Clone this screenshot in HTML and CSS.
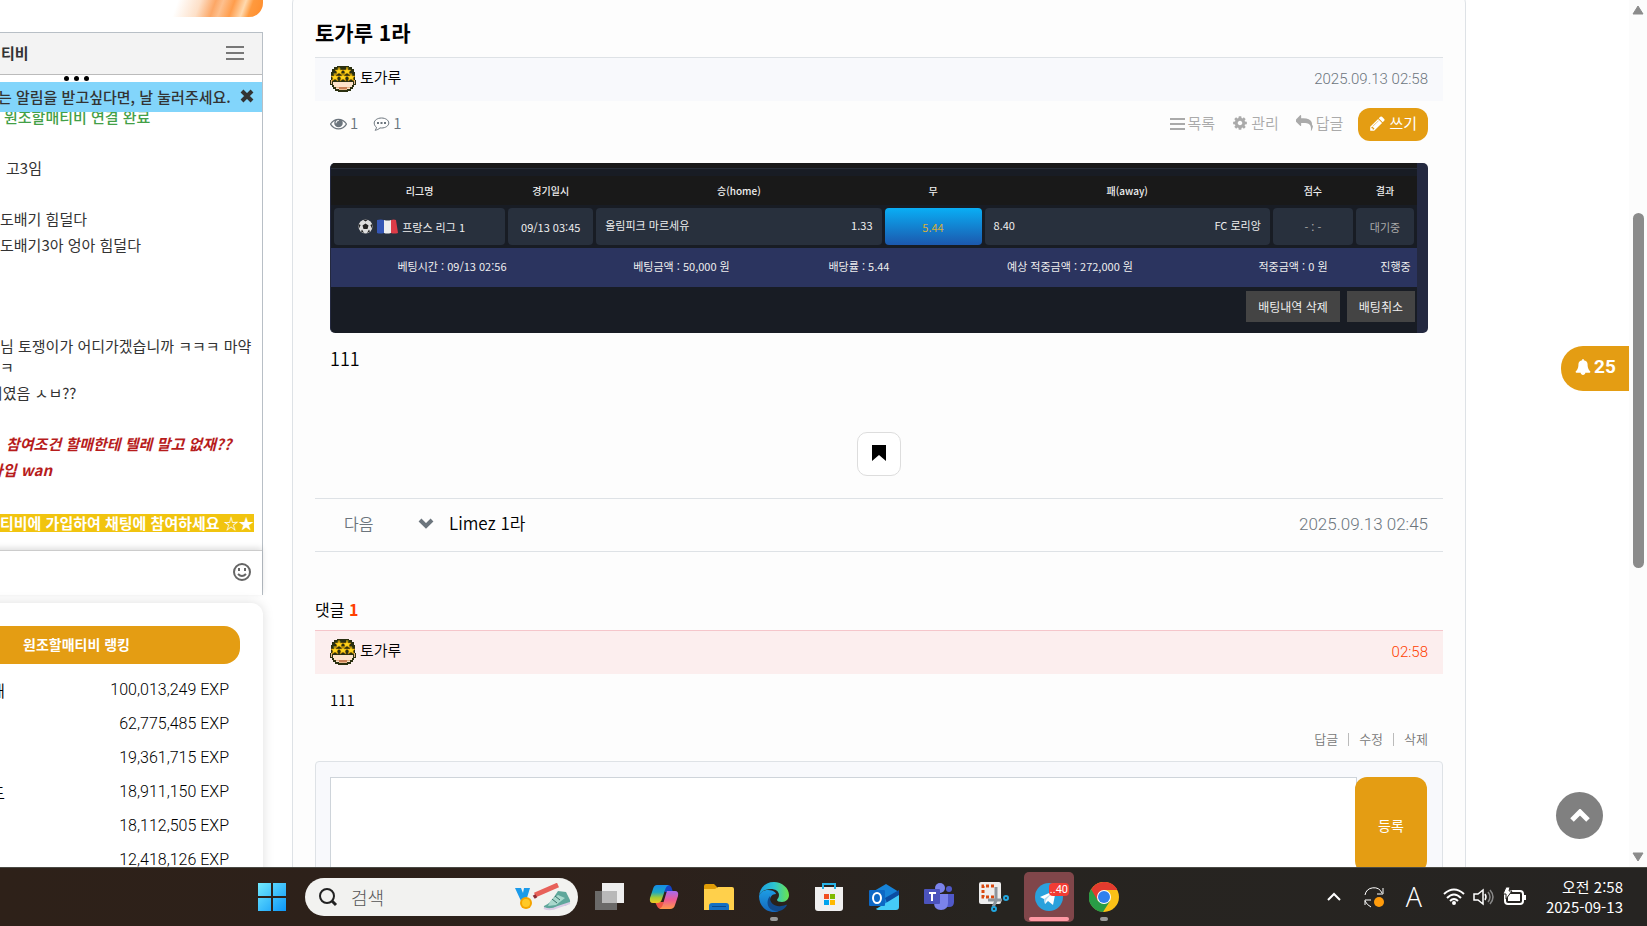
FILE: index.html
```html
<!doctype html>
<html lang="ko">
<head>
    <meta charset="UTF-8">
    <meta content="width=device-width, initial-scale=1" name="viewport">
    <title>토가루 1라</title>
    <link rel="stylesheet" href="styles.css">
</head>
<body>
<!-- shared symbols -->
<svg class="symbols" aria-hidden="true">
    <symbol id="soldier" viewBox="0 0 26 26">
        <path fill="#2b3010" d="M7 0h12v1h3v2h2v3h1v8h1v5h-2v2h-1v2h-2v2h-3v1H8v-1H5v-2H3v-2H2v-2H0v-5h1V6h1V3h2V1h3z"/>
        <path fill="#4b5a15" d="M7 2h4v2H7zM16 1h3v2h-3zM3 7h3v2H3zM20 8h3v2h-3zM11 7h4v3h-4z"/>
        <path fill="#fde3cb" d="M3 16h20v3h-1v2h-2v2h-3v1H9v-1H6v-2H4v-2H3z"/>
        <path fill="#e9b98c" d="M1 14h1v4H1zM24 14h1v4h-1zM6 21h14v1h-3v2H9v-2H6z"/>
        <path fill="#c98057" d="M9 21h8v2H9z"/>
        <g fill="#ffd51c" stroke="#c98900" stroke-width=".5">
            <path id="star" d="M9 1l1 3h3l-2 2 1 3-3-2-3 2 1-3-2-2h3z"/>
            <use href="#star" x="8"/>
            <use href="#star" x="-4" y="6"/>
            <use href="#star" x="4" y="6"/>
            <use href="#star" x="12" y="6"/>
        </g>
    </symbol>
</svg>

<div class="window">
    <aside class="sidebar">
        <div class="banner"></div>
        <section class="chat">
            <header class="chat-header">
                <b>티비</b>
                <button class="chat-menu" aria-label="메뉴"><span></span><span></span><span></span></button>
            </header>
            <div class="chat-dots"><i></i><i></i><i></i></div>
            <div class="chat-notice">
                <span>는 알림을 받고싶다면, 날 눌러주세요.</span>
                <button aria-label="닫기">
                    <svg width="14" height="14" viewBox="0 0 14 14"><path d="M2 2l10 10M12 2L2 12" stroke="#333" stroke-width="4"/></svg>
                </button>
            </div>
            <ul class="chat-list">
                <li class="connected">원조할매티비 연결 완료</li>
                <li class="blank"></li>
                <li class="inset">고3임</li>
                <li class="blank"></li>
                <li>도배기 힘덜다</li>
                <li>도배기3아 엉아 힘덜다</li>
                <li class="blank"></li>
                <li class="blank"></li>
                <li class="blank"></li>
                <li>님 토쟁이가 어디가겠습니까 ㅋㅋㅋ 마약<br>ㅋ</li>
                <li class="cut">이였음 ㅅㅂ??</li>
                <li class="blank"></li>
                <li class="hot inset">참여조건 할매한테 텔레 말고 없재??</li>
                <li class="hot cut">가입 wan</li>
                <li class="blank"></li>
                <li class="join"><mark>티비에 가입하여 채팅에 참여하세요 ☆★</mark></li>
            </ul>
            <div class="chat-input">
                <button aria-label="이모티콘">
                    <svg width="20" height="20" viewBox="0 0 20 20" fill="none" stroke="#666" stroke-width="2">
                        <circle cx="10" cy="10" r="8"/>
                        <path d="M6 12q4 4 8 0"/>
                        <path d="M7 6v3M13 6v3"/>
                    </svg>
                </button>
            </div>
        </section>
        <section class="ranking">
            <h2>원조할매티비 랭킹</h2>
            <ol>
                <li><span>매</span><span>100,013,249 EXP</span></li>
                <li><span></span><span>62,775,485 EXP</span></li>
                <li><span></span><span>19,361,715 EXP</span></li>
                <li><span>드</span><span>18,911,150 EXP</span></li>
                <li><span></span><span>18,112,505 EXP</span></li>
                <li><span></span><span>12,418,126 EXP</span></li>
            </ol>
        </section>
    </aside>

    <main class="board">
        <h1>토가루 1라</h1>
        <div class="author-bar">
            <svg class="avatar" width="26" height="26"><use href="#soldier"/></svg>
            <a href="#">토가루</a>
            <time>2025.09.13 02:58</time>
        </div>
        <div class="tools">
            <span class="count">
                <svg width="17" height="17" viewBox="0 0 1792 1792"><path d="M1664 960q-152-236-381-353 61 104 61 225 0 185-131.500 316.500t-316.500 131.500-316.500-131.500-131.500-316.500q0-121 61-225-229 117-381 353 133 205 333.500 326.500t434.500 121.500 434.500-121.500 333.500-326.500zm-720-384q0-20-14-34t-34-14q-125 0-214.500 89.500t-89.500 214.500q0 20 14 34t34 14 34-14 14-34q0-86 61-147t147-61q20 0 34-14t14-34zm848 384q0 34-20 69-140 230-376.500 368.500t-499.500 138.500-499.500-139-376.500-368q-20-35-20-69t20-69q140-229 376.500-368t499.500-139 499.500 139 376.500 368q20 35 20 69z"/></svg>
                1
            </span>
            <span class="count">
                <svg width="17" height="17" viewBox="0 0 17 17">
                    <path d="M8.500 3C12.600 3 15.800 5.300 15.800 8s-3.200 5-7.300 5l-1.500-.1C5.500 14.300 4 15 2 15.200c1-1 1.400-1.800 1.400-3C2 11.200 1.200 9.700 1.200 8c0-2.700 3.200-5 7.300-5z" fill="none" stroke="#6c757d"/>
                    <path d="M4 7h2v2H4zM7.500 7h2v2h-2zM11 7h2v2h-2z"/>
                </svg>
                1
            </span>
            <nav>
                <a href="#"><svg width="15" height="15" viewBox="0 0 15 15"><path d="M0 2h15v2H0zM0 7h15v2H0zM0 12h15v2H0z"/></svg>목록</a>
                <a href="#"><svg width="16" height="16" viewBox="0 0 1792 1792"><path d="M1152 896q0-106-75-181t-181-75-181 75-75 181 75 181 181 75 181-75 75-181zm512-109v222q0 12-8 23t-20 13l-185 28q-19 54-39 91 35 50 107 138 10 12 10 25t-9 23q-27 37-99 108t-94 71q-12 0-26-9l-138-108q-44 23-91 38-16 136-29 186-7 28-36 28h-222q-14 0-24.500-8.500t-11.500-21.500l-28-184q-49-16-90-37l-141 107q-10 9-25 9-14 0-25-11-126-114-165-168-7-10-7-23 0-12 8-23 15-21 51-66.500t54-70.500q-27-50-41-99l-183-27q-13-2-21-12.500t-8-23.500v-222q0-12 8-23t19-13l186-28q14-46 39-92-40-57-107-138-10-12-10-24 0-10 9-23 26-36 98.500-107.500t94.500-71.500q13 0 26 10l138 107q44-23 91-38 16-136 29-186 7-28 36-28h222q14 0 24.500 8.500t11.500 21.500l28 184q49 16 90 37l142-107q9-9 24-9 13 0 25 10 129 119 165 170 7 8 7 22 0 12-8 23-15 21-51 66.500t-54 70.500q26 50 41 98l183 28q13 2 21 12.500t8 23.500z"/></svg>관리</a>
                <a href="#"><svg width="17" height="17" viewBox="0 0 1792 1792"><path d="M1792 1120q0 166-127 451-3 7-10.500 24t-13.500 30-13 22q-12 17-28 17-15 0-23.500-10t-8.500-25q0-9 2.500-26.500t2.500-23.500q5-68 5-123 0-112-19.500-200.500t-54-153.500-89-112-118-77.500-149-42.500-174.500-19.500-207-5.500h-224v256q0 26-19 45t-45 19-45-19l-512-512q-19-19-19-45t19-45l512-512q19-19 45-19t45 19 19 45v256h224q713 0 875 403 53 134 53 333z"/></svg>답글</a>
                <a class="write" href="#"><svg width="17" height="17" viewBox="0 0 1792 1792"><path d="M491 1536l91-91-235-235-91 91v107h128v128h107zm523-928q0-22-22-22-10 0-17 7l-542 542q-7 7-7 17 0 22 22 22 10 0 17-7l542-542q7-7 7-17zm-54-192l416 416-832 832h-416v-416zm683 96q0 53-37 90l-166 166-416-416 166-165q36-38 90-38 53 0 91 38l235 234q37 39 37 91z"/></svg>쓰기</a>
            </nav>
        </div>

        <div class="slip">
            <div class="slip-top"></div>
            <table>
                <colgroup>
                    <col class="w-league"><col class="w-date"><col class="w-team"><col class="w-draw"><col class="w-team"><col class="w-score"><col class="w-result">
                </colgroup>
                <thead>
                <tr>
                    <th>리그명</th>
                    <th>경기일시</th>
                    <th>승(home)</th>
                    <th>무</th>
                    <th>패(away)</th>
                    <th>점수</th>
                    <th>결과</th>
                </tr>
                </thead>
                <tbody>
                <tr>
                    <td>
                        <div class="league">
                            <svg width="15" height="15" viewBox="0 0 15 15">
                                <circle cx="7.500" cy="7.500" r="7" fill="#ddd"/>
                                <path fill="#222" d="M7.500 4.500l3 2-1 3.500h-4l-1-3.500zM5 .8h5L7.500 2.500zM.6 5l2 1L1 9.500zM14.400 5l-2 1L14 9.500zM3 12.500l1-2 2 3.500zM12 12.500l-1-2-2 3.500z"/>
                            </svg>
                            <svg width="21" height="15" viewBox="0 0 21 15">
                                <path fill="#3556b5" d="M0 1q4-1 7 0v13q-4 1-7 0z"/>
                                <path fill="#eee" d="M7 1q4 1 7 0v13q-4 1-7 0z"/>
                                <path fill="#dc3c48" d="M14 1q3-1 5 0l2 13q-4 1-7 0z"/>
                            </svg>
                            <span>프랑스 리그 1</span>
                        </div>
                    </td>
                    <td>09/13 03:45</td>
                    <td><div class="team"><span>올림피크 마르세유</span><span>1.33</span></div></td>
                    <td class="picked">5.44</td>
                    <td><div class="team"><span>8.40</span><span>FC 로리앙</span></div></td>
                    <td class="dim">- : -</td>
                    <td class="dim">대기중</td>
                </tr>
                </tbody>
            </table>
            <div class="slip-sum">
                <span>베팅시간 : 09/13 02:56</span>
                <span>베팅금액 : 50,000 원</span>
                <span>배당률 : 5.44</span>
                <span>예상 적중금액 : 272,000 원</span>
                <span>적중금액 : 0 원</span>
                <span>진행중</span>
            </div>
            <div class="slip-actions">
                <button>배팅내역 삭제</button>
                <button>배팅취소</button>
            </div>
        </div>

        <p class="content">111</p>
        <button class="bookmark" aria-label="스크랩">
            <svg width="14" height="16" viewBox="0 0 14 16"><path d="M0 0h14v16l-7-6-7 6z"/></svg>
        </button>

        <div class="next-post">
            <span class="label">다음</span>
            <svg width="16" height="12" viewBox="0 0 16 12"><path d="M2 2l6 6 6-6" fill="none" stroke="#6c757d" stroke-width="4"/></svg>
            <a href="#">Limez 1라</a>
            <time>2025.09.13 02:45</time>
        </div>

        <h2 class="comment-title">댓글 <b>1</b></h2>
        <div class="author-bar mine">
            <svg class="avatar" width="26" height="26"><use href="#soldier"/></svg>
            <a href="#">토가루</a>
            <time>02:58</time>
        </div>
        <p class="comment">111</p>
        <div class="comment-actions">
            <a href="#">답글</a><i></i><a href="#">수정</a><i></i><a href="#">삭제</a>
        </div>
        <form class="comment-form">
            <textarea aria-label="댓글 내용"></textarea>
            <button type="button">등록</button>
        </form>
    </main>

    <div class="scrollbar">
        <svg width="12" height="10" viewBox="0 0 12 10"><path d="M6 1l5 8H1z" fill="#8b8b8b" stroke="#8b8b8b" stroke-linejoin="round"/></svg>
        <div class="track"><div class="thumb"></div></div>
        <svg width="12" height="10" viewBox="0 0 12 10"><path d="M6 9L1 1h10z" fill="#8b8b8b" stroke="#8b8b8b" stroke-linejoin="round"/></svg>
    </div>

    <button class="alarm">
        <svg width="16" height="16" viewBox="0 0 1792 1792"><path d="M1728 1408q0 52-38 90t-90 38h-448q0 106-75 181t-181 75-181-75-75-181h-448q-52 0-90-38t-38-90q50-42 91-88t85-119.500 74.500-158.500 50-206 19.500-260q0-152 117-282.500t307-158.500q-8-19-8-39 0-40 28-68t68-28 68 28 28 68q0 20-8 39 190 28 307 158.500t117 282.500q0 139 19.500 260t50 206 74.500 158.500 85 119.500 91 88z"/></svg>
        25
    </button>
    <button class="go-top" aria-label="맨 위로">
        <svg width="20" height="14" viewBox="0 0 20 14"><path d="M2 11l8-8 8 8" fill="none" stroke="#fff" stroke-width="5"/></svg>
    </button>
</div>

<footer class="taskbar">
    <button class="app" aria-label="시작">
        <svg width="30" height="30" viewBox="0 0 30 30">
            <defs><linearGradient id="win" x1="0" y1="0" x2="1" y2="1" gradientUnits="objectBoundingBox"><stop stop-color="#72eafe"/><stop offset="1" stop-color="#0c96f8"/></linearGradient></defs>
            <path fill="url(#win)" d="M1 1h13v13H1zM16 1h13v13H16zM1 16h13v13H1zM16 16h13v13H16z"/>
        </svg>
    </button>
    <label class="search">
        <svg width="20" height="20" viewBox="0 0 20 20" fill="none" stroke="#222"><circle cx="9" cy="9" r="7" stroke-width="2"/><path d="M14 14l4 4" stroke-width="3"/></svg>
        <input type="text" placeholder="검색" aria-label="검색">
        <svg width="56" height="28" viewBox="0 0 56 28">
            <path fill="#1c9bea" d="M0 5h6l4 10-4 3zM9 5h6l-4 13-4-3z"/>
            <circle cx="11" cy="20" r="6" fill="#f5a400"/><circle cx="11" cy="20" r="4" fill="#ffc928"/>
            <path d="M20 12L43 2" stroke="#e8615a" stroke-width="5"/><path d="M19 12l2 3" stroke="#8d2b33" stroke-width="3"/>
            <path fill="#5fa79b" d="M29 23q7-3 10-9l4-6 8 1 3 6q3 5-2 7l-18 4q-6 0-5-3z"/>
            <path fill="#a8d8cc" d="M36 17l7-5 7 3-9 7-8 1z"/>
            <path fill="none" stroke="#d9cbe4" stroke-width="2" d="M29 25q6 3 14-1l12-4"/>
            <path stroke="#386f68" d="M40 13l5 4M37 16l5 4"/>
        </svg>
    </label>
    <div class="apps">
        <button class="app" aria-label="작업 보기">
            <svg width="30" height="28" viewBox="0 0 30 28"><path fill="#eee" d="M8 0h22v20H8z"/><path fill="#777" fill-opacity=".85" d="M1 8h22v19H1z"/><path fill="#b9b9b9" d="M8 8h15v12H8z"/></svg>
        </button>
        <button class="app" aria-label="Copilot">
            <svg width="30" height="28" viewBox="0 0 30 28">
                <defs>
                    <linearGradient id="coA" x2="0" y2="1"><stop stop-color="#168be8"/><stop offset=".4" stop-color="#1aa8c4"/><stop offset=".7" stop-color="#a1cc35"/><stop offset="1" stop-color="#f4ca22"/></linearGradient>
                    <linearGradient id="coB" x2="0" y2="1"><stop stop-color="#a66bf0"/><stop offset=".5" stop-color="#ef5a91"/><stop offset="1" stop-color="#ff9b4a"/></linearGradient>
                </defs>
                <path fill="#1444c8" d="M12 2h7q3 0 4 4l1 3h-8z"/>
                <path fill="#ef5545" d="M6 19h9l-2 7q-4 0-5-3z"/>
                <path fill="url(#coA)" d="M8 2h12q-3 1-4 5l-3 9q-1 4-5 4H4q-4 0-3-5L4 6q1-4 4-4z"/>
                <path fill="url(#coB)" d="M18 8h8q4 0 3 5l-3 9q-1 4-5 4H10q3-1 4-5l3-10z"/>
            </svg>
        </button>
        <button class="app" aria-label="파일 탐색기">
            <svg width="30" height="28" viewBox="0 0 30 28">
                <path fill="#df9c07" d="M0 3q0-2 2-2h8l3 3v6H0z"/>
                <path fill="#ffd04b" d="M0 6h11l3-2h14q2 0 2 2v21H0z"/>
                <path fill="#1570c4" d="M5 27v-4q0-3 3-3h14q3 0 3 3v4z"/><path fill="#0b4a8b" d="M8 23h14v1H8z"/>
            </svg>
        </button>
        <button class="app open" aria-label="Edge">
            <svg width="30" height="30" viewBox="0 0 30 30">
                <defs>
                    <linearGradient id="edA"><stop stop-color="#1b9de0"/><stop offset=".5" stop-color="#2cc3d2"/><stop offset="1" stop-color="#6be44b"/></linearGradient>
                    <linearGradient id="edB" x2="0" y2="1"><stop stop-color="#1d9de4"/><stop offset="1" stop-color="#1467bd"/></linearGradient>
                </defs>
                <path fill="url(#edA)" d="M0 14C1 5 7 0 15 0s15 6 15 13c0 4-3 7-7 7-3 0-5-1-5-2s2-2 2-5c0-4-4-6-8-6C6 7 1 10 0 14z"/>
                <path fill="url(#edB)" d="M0 14c1-4 5-6 9-6 6 0 8 3 8 4-4 0-6 3-6 6 0 6 4 10 10 10-2 2-4 2-6 2C6 30 0 23 0 14z"/>
                <path fill="#114a8c" d="M11 14c-1 8 6 11 11 10 3 0 5-2 6-1-2 4-7 7-12 6-7-1-10-9-5-15z"/>
            </svg>
        </button>
        <button class="app" aria-label="Microsoft Store">
            <svg width="30" height="30" viewBox="0 0 30 30">
                <path d="M9 7V2h12v5" fill="none" stroke="#29b3e6" stroke-width="2"/>
                <path fill="#f0f0f0" d="M1 5h28v21q0 3-3 3H4q-3 0-3-3z"/>
                <path fill="#29b3e6" d="M8 5h2v2H8zM20 5h2v2h-2z"/>
                <path fill="#f25022" d="M10 12h5v5h-5z"/><path fill="#7fba00" d="M16 12h5v5h-5z"/><path fill="#00a4ef" d="M10 18h5v5h-5z"/><path fill="#ffb900" d="M16 18h5v5h-5z"/>
            </svg>
        </button>
        <button class="app" aria-label="Outlook">
            <svg width="30" height="28" viewBox="0 0 30 28">
                <path fill="#1683d8" d="M5 8L17 1l13 8v12L17 25 5 18z"/>
                <path fill="#0b4da2" d="M16 15l14-8v6l-12 7z"/>
                <path fill="#45cbf7" d="M7 26l23-14v12q0 3-3 3H9q-2 0-2-2z"/>
                <rect y="7" width="16" height="16" rx="1" fill="#0c68c5"/>
                <ellipse cx="8" cy="15" rx="4" ry="5" fill="none" stroke="#fff" stroke-width="2"/>
            </svg>
        </button>
        <button class="app" aria-label="Teams">
            <svg width="30" height="28" viewBox="0 0 30 28">
                <circle cx="16" cy="5" r="5" fill="#7b83eb"/><circle cx="25" cy="6" r="3" fill="#5059c9"/>
                <path fill="#5059c9" d="M19 11h11v8q0 5-5 5h-3z"/><path fill="#7b83eb" d="M10 11h14v9q0 7-7 7t-7-7z"/>
                <rect y="6" width="16" height="15" rx="1" fill="#4b53bc"/>
                <path d="M5 10h7M8 10v8" stroke="#fff" stroke-width="2"/>
            </svg>
        </button>
        <button class="app" aria-label="캡처 도구">
            <svg width="30" height="30" viewBox="0 0 30 30">
                <rect width="22" height="22" rx="2" fill="#eee"/>
                <path d="M15 4H4v11h11" fill="none" stroke="#d9480f" stroke-width="3" stroke-dasharray="3 2"/>
                <path d="M17 5v14l-3 6M9 18h14" fill="none" stroke="#8e959c" stroke-width="3"/>
                <circle cx="15" cy="27" r="2" fill="none" stroke="#22a7e0" stroke-width="2"/><circle cx="27" cy="16" r="2" fill="none" stroke="#22a7e0" stroke-width="2"/>
            </svg>
        </button>
        <button class="app active" aria-label="Telegram">
            <svg width="28" height="28" viewBox="0 0 28 28">
                <circle cx="14" cy="14" r="14" fill="#2aa1dc"/>
                <path fill="#fff" d="M5 14l16-7-3 15-5-4-3 3-1-5z"/><path fill="#b5d8ec" d="M9 16l8-6-6 7-1 4z"/>
            </svg>
            <span class="badge">..40</span>
        </button>
        <button class="app open" aria-label="Chrome">
            <svg width="30" height="30" viewBox="0 0 30 30">
                <circle cx="15" cy="15" r="15" fill="#fbc116"/>
                <path fill="#e33b2e" d="M2 8a15 15 0 0 1 26-1L28 8H15l-7 11z"/>
                <path fill="#299c46" d="M2 7l7 12 6 3 6-3-7 11A15 15 0 0 1 2 7z"/>
                <circle cx="15" cy="15" r="7" fill="#fff"/><circle cx="15" cy="15" r="6" fill="#2f80ee"/>
            </svg>
        </button>
    </div>
    <div class="tray">
        <svg width="40" height="24" viewBox="0 0 40 24" fill="none" stroke="#fff" stroke-width="2"><path d="M14 15l6-6 6 6"/></svg>
        <svg width="40" height="24" viewBox="0 0 40 24" fill="none" stroke="#fff"><path d="M11 10a9 9 0 0 1 17-2M29 3v6h-6M11 20v-5h6M11 16q2 4 6 6"/><circle cx="25" cy="17" r="5" fill="#ff9b0b" stroke="none"/></svg>
        <span class="ime">A</span>
        <svg width="30" height="24" viewBox="0 0 30 24" fill="none" stroke="#fff" stroke-width="2"><path d="M5 9q10-9 20 0M8 13q7-7 14 0M11 16q4-4 8 0"/><circle cx="15" cy="18" r="1" fill="#fff"/></svg>
        <svg width="30" height="24" viewBox="0 0 30 24" fill="none" stroke="#fff" stroke-width="1.500"><path d="M5 9h4l5-4v14l-5-4H5zM16 9q2 3 0 6"/><path stroke="#888" d="M19 7q4 5 0 10M21 5q6 7 0 14"/></svg>
        <svg width="30" height="24" viewBox="0 0 30 24"><rect x="6" y="6" width="18" height="13" rx="3" fill="none" stroke="#fff" stroke-width="2"/><rect x="9" y="9" width="12" height="7" fill="#fff"/><path fill="#fff" d="M25 10h2v5h-2z"/><path fill="#fff" stroke="#272421" d="M7 2l4 0-1 4h3l-6 8v-5H4z"/></svg>
        <div class="clock"><span>오전 2:58</span><span>2025-09-13</span></div>
    </div>
</footer>
</body>
</html>
```
FILE: styles.css
```css
* {
    box-sizing: border-box;
}

body {
    margin: 0;
    height: 100vh;
    display: flex;
    flex-direction: column;
    overflow: hidden;
    background: #fff;
    color: #000;
    font: 350 15px/24px "Noto Sans CJK KR", sans-serif;
}

h1, h2, p, ul, ol {
    margin: 0;
    padding: 0;
    list-style: none;
}

a {
    color: inherit;
    text-decoration: none;
}

button {
    padding: 0;
    border: none;
    background: transparent;
    font: inherit;
    color: inherit;
    cursor: pointer;
}

svg {
    flex: none;
}

svg:not([fill]) {
    fill: currentColor;
}

.symbols {
    position: absolute;
    width: 0;
    height: 0;
}

.window {
    position: relative;
    flex: 1;
    min-height: 0;
    display: flex;
    overflow: hidden;
}

/* sidebar, its left part is scrolled out of the window */
.sidebar {
    flex: none;
    width: 373px;
    margin-left: -110px;
}

.banner {
    height: 17px;
    margin-bottom: 15px;
    border-radius: 0 0 14px 0;
    background: linear-gradient(110deg, #fff 76%, #fde0c8 82%, #fca766 86%, #fdc08e 88%, #ff9d4c 91%, #ffd9ae 94%, #ff9a3e 96%, #ff8c2b);
}

.chat {
    border: 1px solid #b8bfc6;
    border-bottom: none;
    height: 563px;
    display: flex;
    flex-direction: column;
    font-weight: 400;
    line-height: 21px;
    color: #333;
}

.chat-header {
    height: 42px;
    flex: none;
    padding: 0 18px 2px 110px;
    display: flex;
    align-items: center;
    justify-content: space-between;
    background: #f3f3f3;
    border-bottom: 1px solid #bbb;
}

.chat-menu {
    width: 18px;
    display: grid;
    gap: 4px;
}

.chat-menu span {
    height: 2px;
    background: #777;
}

.chat-dots {
    height: 7px;
    flex: none;
    padding: 1px 0 0 173px;
    display: flex;
    gap: 5px;
}

.chat-dots i {
    width: 5px;
    height: 5px;
    border-radius: 50%;
    background: #000;
}

.chat-notice {
    height: 30px;
    flex: none;
    padding: 0 8px 2px 107px;
    display: flex;
    align-items: center;
    justify-content: space-between;
    background: #82d5fb;
    font-weight: 500;
    white-space: nowrap;
    z-index: 1;
}

.chat-notice button {
    height: 14px;
    line-height: 0;
}

.chat-list {
    flex: 1;
    min-height: 0;
    padding-left: 109px;
    margin-top: -6px;
    display: flex;
    flex-direction: column;
    gap: 5px;
    white-space: nowrap;
}

.chat-list .blank {
    height: 20px;
    flex: none;
}

.chat-list .inset {
    padding-left: 6px;
}

.chat-list .cut {
    margin-left: -11px;
}

.chat-list .connected {
    padding-left: 4px;
    font-weight: 500;
    color: #43a047;
}

.hot {
    font-weight: 700;
    font-style: italic;
    color: #b71c1c;
}

.chat-list .join {
    padding-top: 2px;
}

.join mark {
    display: inline-block;
    height: 18px;
    line-height: 18px;
    background: #f1c40f;
    color: #fff;
    font-weight: 700;
}

.chat-input {
    height: 45px;
    flex: none;
    padding: 11px 10px;
    border-top: 1px solid #ccc;
    box-shadow: 0 -2px 6px #0002;
    text-align: right;
}

.ranking {
    position: relative;
    margin-top: 8px;
    padding: 23px;
    border-radius: 12px;
    background: #fff;
    box-shadow: 0 0 12px #0002;
}

.ranking h2 {
    height: 38px;
    margin-bottom: 9px;
    border-radius: 16px;
    background: #e49d13;
    color: #fff;
    font-size: 14px;
    font-weight: 700;
    line-height: 36px;
    text-align: center;
}

.ranking li {
    height: 34px;
    padding-right: 11px;
    display: grid;
    grid-template-columns: 92px 1fr;
    align-items: center;
    font-size: 16px;
    text-align: right;
}

.ranking li span:last-child,
time {
    font-family: Roboto, "Noto Sans CJK KR", sans-serif;
}

/* article */
.board {
    flex: 1;
    min-width: 0;
    margin: -8px 163px -200px 29px;
    padding: 25px 22px 0 22px;
    border: 1px solid #dee2e6;
    border-top: none;
    border-radius: 12px;
    background: #fdfdfd;
}

h1 {
    margin-bottom: 10px;
    font-size: 21px;
    font-weight: 700;
    line-height: 30px;
}

.author-bar {
    height: 44px;
    padding: 0 15px 2px;
    display: flex;
    align-items: center;
    gap: 4px;
    border-top: 1px solid #dee2e6;
    background: #f8f9fc;
}

.author-bar a {
    padding-bottom: 4px;
}

.author-bar time,
.next-post time {
    margin-left: auto;
    color: #6c757d;
}

.mine {
    border-color: #f5c6cb;
    background: #fceeee;
}

.mine time {
    color: #ff4000;
}

.tools {
    padding: 7px 15px 22px;
    display: flex;
    align-items: center;
    gap: 15px;
    color: #6c757d;
}

.count {
    padding-bottom: 3px;
    display: flex;
    align-items: center;
    gap: 3px;
}

.count svg,
.tools nav svg {
    display: block;
}

.tools nav {
    margin-left: auto;
    display: flex;
    gap: 17px;
    color: #aaa;
}

.tools nav a {
    padding-bottom: 3px;
    display: flex;
    align-items: center;
    gap: 3px;
}

.tools nav .write {
    height: 33px;
    margin-left: -2px;
    padding: 0 11px 3px;
    border-radius: 12px;
    background: #e49d13;
    color: #fff;
    font-weight: 400;
}

/* betting slip */
.slip {
    margin: 0 15px;
    border-right: 11px solid #242940;
    border-left: 1px solid #242940;
    border-radius: 5px;
    background: #181c24;
    color: #eee;
    overflow: hidden;
    font-size: 11px;
    font-weight: 400;
    line-height: 16px;
}

.slip-top {
    height: 6px;
    margin-bottom: 7px;
    background: #191919;
    border-bottom: 1px solid #262d38;
}

.slip table {
    width: 100%;
    table-layout: fixed;
    border-spacing: 3px;
    background: linear-gradient(#191919 29px, #181c24 29px);
}

.w-league { width: 171px; }
.w-date { width: 85px; }
.w-team { width: 285px; }
.w-draw { width: 97px; }
.w-score { width: 80px; }
.w-result { width: 58px; }

.slip th {
    height: 26px;
    padding: 0 0 2px;
    font-size: 10px;
    font-weight: 500;
}

.slip td {
    height: 37px;
    padding: 0;
    border-radius: 4px;
    background: #28303d;
    text-align: center;
}

.slip td.picked {
    background: linear-gradient(#09aef5, #1c58ad);
    color: #d9b03c;
}

.slip td.dim {
    color: #aaa;
}

.league {
    padding-right: 16px;
    display: flex;
    align-items: center;
    justify-content: center;
    gap: 4px;
}

.team {
    padding: 0 9px 4px;
    display: flex;
    justify-content: space-between;
}

.slip-sum {
    height: 39px;
    padding-bottom: 3px;
    display: grid;
    grid-template-columns: 242fr 217fr 138fr 284fr 162fr 43fr;
    align-items: center;
    background: #2b345f;
    text-align: center;
    white-space: nowrap;
}

.slip-actions {
    height: 46px;
    padding: 4px 2px;
    display: flex;
    justify-content: flex-end;
    gap: 7px;
}

.slip-actions button {
    height: 31px;
    padding: 0 12px;
    background: #444;
    font-size: 12px;
}

.content {
    margin: 11px 15px 60px;
    font-size: 18px;
    line-height: 28px;
}

.bookmark {
    display: flex;
    align-items: center;
    justify-content: center;
    width: 44px;
    height: 44px;
    margin: 0 auto 22px;
    padding-bottom: 3px;
    border: 1px solid #ddd;
    border-radius: 10px;
    background: #fff;
}

.next-post {
    height: 54px;
    margin-bottom: 45px;
    padding: 0 15px 3px 29px;
    display: flex;
    align-items: center;
    border: solid #dee2e6;
    border-width: 1px 0;
    font-size: 17px;
}

.next-post .label {
    width: 74px;
    padding-bottom: 2px;
    font-size: 16px;
    color: #6c757d;
}

.next-post a {
    margin-left: 15px;
    padding-bottom: 2px;
}

.comment-title {
    margin-bottom: 9px;
    font-size: 16px;
    font-weight: 400;
}

.comment-title b {
    color: #ff4000;
}

.comment {
    margin: 14px 15px 17px;
}

.comment-actions {
    height: 20px;
    margin: 0 15px 12px;
    display: flex;
    align-items: center;
    justify-content: flex-end;
    gap: 10px;
    font-size: 13px;
    color: #777;
}

.comment-actions i {
    width: 1px;
    height: 13px;
    background: #bbb;
}

.comment-form {
    padding: 15px 15px 15px 14px;
    display: flex;
    border: 1px solid #dee2e6;
    border-radius: 4px;
    background: #f8f9fc;
}

.comment-form textarea {
    flex: 1;
    height: 96px;
    border: 1px solid #ced4da;
    background: #fff;
    resize: none;
}

.comment-form button {
    width: 72px;
    margin-left: -2px;
    border-radius: 12px;
    background: #e49d13;
    color: #fff;
    font-size: 14px;
    font-weight: 400;
}

/* window scrollbar */
.scrollbar {
    width: 18px;
    flex: none;
    padding: 5px 0;
    display: flex;
    flex-direction: column;
    align-items: center;
    gap: 5px;
    background: #fcfcfc;
}

.track {
    flex: 1;
    display: grid;
    grid-template-rows: 193fr 355fr 279fr;
}

.thumb {
    grid-row: 2;
    width: 11px;
    border-radius: 6px;
    background: #8b8b8b;
}

/* floating buttons */
.alarm {
    position: absolute;
    top: 346px;
    right: 18px;
    width: 68px;
    height: 45px;
    padding: 0 14px 4px 14px;
    display: flex;
    align-items: center;
    gap: 3px;
    border-radius: 22px 0 0 22px;
    background: #e49d13;
    color: #fff;
    font: 700 19px/24px Roboto, sans-serif;
}

.go-top {
    position: absolute;
    right: 44px;
    bottom: 28px;
    width: 47px;
    height: 47px;
    display: flex;
    align-items: center;
    justify-content: center;
    border-radius: 50%;
    background: #808080;
}

/* taskbar */
.taskbar {
    flex: none;
    height: 59px;
    padding: 0 24px 0 244px;
    display: flex;
    align-items: center;
    border-top: 1px solid #4a4a44;
    background: linear-gradient(90deg, #2e2119, #2c211b 40%, #272420 60%, #262422);
    color: #fff;
}

.app {
    position: relative;
    width: 55px;
    height: 50px;
    display: flex;
    align-items: center;
    justify-content: center;
}

.app.open::after {
    content: "";
    position: absolute;
    bottom: 1px;
    width: 8px;
    height: 4px;
    border-radius: 2px;
    background: #999;
}

.app.active {
    width: 50px;
    margin: 0 2px 0 3px;
    border-radius: 5px;
    background: #80464a;
}

.app.active::after {
    content: "";
    position: absolute;
    bottom: 1px;
    width: 40px;
    height: 4px;
    border-radius: 2px;
    background: #ff99a4;
}

.badge {
    position: absolute;
    top: 11px;
    right: 5px;
    padding: 0 1px;
    border-radius: 4px;
    background: #f23c34;
    font: 400 11px/13px Roboto, sans-serif;
}

.search {
    width: 273px;
    height: 38px;
    margin: 0 3px 0 6px;
    padding: 0 7px 0 13px;
    display: flex;
    align-items: center;
    gap: 13px;
    border-radius: 19px;
    background: #f2f2f0;
}

.search input {
    flex: 1;
    min-width: 0;
    padding: 0;
    border: none;
    outline: none;
    background: transparent;
    font: 300 18px/24px "Noto Sans CJK KR", sans-serif;
}

.search input::placeholder {
    color: #555;
}

.apps {
    display: flex;
}

.tray {
    margin-left: auto;
    display: flex;
    align-items: center;
}

.ime {
    width: 40px;
    margin-right: 5px;
    text-align: center;
    font: 300 27px/30px "Open Sans", sans-serif;
}

.clock {
    margin-left: 17px;
    display: grid;
    line-height: 20px;
    font-weight: 400;
    text-align: right;
}
```
